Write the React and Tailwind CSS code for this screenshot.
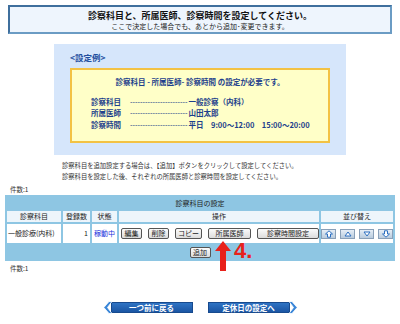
import React from "react";

const F = { fontFamily: '"Noto Sans CJK JP", "Noto Sans", sans-serif' };
const DASH = { fontFamily: '"Liberation Sans", Arial, sans-serif' };

function SortBtn({ kind }) {
  return (
    <div className="w-[16px] h-[10px] border border-[#8aa0b8] bg-gradient-to-b from-[#e6eef6] to-[#b9cbdd] flex items-center justify-center">
      <svg width="10" height="8" viewBox="0 0 10 8">
        {kind === "top" && (
          <g fill="#fff" stroke="#2c6fc0" strokeWidth="1">
            <path d="M5 0.8 L8.5 4 L6.5 4 L6.5 7.2 L3.5 7.2 L3.5 4 L1.5 4 Z" />
          </g>
        )}
        {kind === "up" && <path d="M5 2 L8 6 L2 6 Z" fill="#fff" stroke="#2c6fc0" strokeWidth="1" />}
        {kind === "down" && <path d="M2 2 L8 2 L5 6 Z" fill="#fff" stroke="#2c6fc0" strokeWidth="1" />}
        {kind === "bottom" && (
          <g fill="#fff" stroke="#2c6fc0" strokeWidth="1">
            <path d="M5 7.2 L8.5 4 L6.5 4 L6.5 0.8 L3.5 0.8 L3.5 4 L1.5 4 Z" />
          </g>
        )}
      </svg>
    </div>
  );
}

function Btn({ children, w }) {
  return (
    <div
      className={`${w} h-[11px] border border-[#555] rounded-[2px] bg-gradient-to-b from-[#fbfbfb] to-[#dcdcdc] flex items-center justify-center text-[7px] leading-none text-[#222]`}
    >
      {children}
    </div>
  );
}

function NavBtn({ children, dir }) {
  return (
    <div className="relative flex items-center">
      {dir === "left" && (
        <svg width="10" height="13" viewBox="0 0 10 13" className="relative z-10 -mr-[2px]">
          <path d="M9 0.5 L6 0.5 L0.8 6.5 L6 12.5 L9 12.5 L4.5 6.5 Z" fill="#3a86d8" stroke="#fff" strokeWidth="0.8" />
        </svg>
      )}
      <div className="w-[82px] h-[11px] bg-gradient-to-b from-[#2f74c4] to-[#1b55a3] border border-[#174a8e] flex items-center justify-center text-white text-[7.5px] font-bold leading-none">
        {children}
      </div>
      {dir === "right" && (
        <svg width="10" height="13" viewBox="0 0 10 13" className="relative z-10 -ml-[2px]">
          <path d="M1 0.5 L4 0.5 L9.2 6.5 L4 12.5 L1 12.5 L5.5 6.5 Z" fill="#3a86d8" stroke="#fff" strokeWidth="0.8" />
        </svg>
      )}
    </div>
  );
}

function Dashes() {
  return (
    <span className="whitespace-nowrap font-normal mr-[1px]" style={DASH}>
      -----------------------
    </span>
  );
}

export default function App() {
  return (
    <div className="relative w-[400px] h-[324px] bg-white overflow-hidden text-[#222]" style={F}>
      {/* Header */}
      <div className="mx-[8px] mt-[5px] h-[29px] border-2 border-t-[#3f6f9d] border-l-[#3f6f9d] border-r-[#6b9cc4] border-b-[#6b9cc4] bg-[#eef5fd] flex flex-col items-center pt-[2px]">
        <div className="text-[9px] font-bold leading-[13px] text-[#111]">診察科目と、所属医師、診察時間を設定してください。</div>
        <div className="text-[7px] leading-[9px] text-[#222]">ここで決定した場合でも、あとから追加･変更できます。</div>
      </div>

      {/* Example */}
      <div className="ml-[54px] mt-[10px] w-[292px] h-[111px] bg-[#d6e6fb] pt-[8px] px-[16px]">
        <div className="text-[8.5px] font-bold leading-[10px] text-[#1f4f9f]">&lt;設定例&gt;</div>
        <div className="mt-[6px] w-[260px] h-[75px] border-2 border-[#f3c244] bg-[#ffffc8] text-[#1e3f8c] font-bold text-[7.5px] leading-[11.5px]">
          <div className="text-center mt-[6px]">診察科目 - 所属医師- 診察時間 の設定が必要です。</div>
          <div className="mt-[8px] ml-[19px]">
            <div className="flex">
              <span className="w-[39px]">診察科目</span>
              <Dashes />
              <span>一般診察（内科）</span>
            </div>
            <div className="flex">
              <span className="w-[39px]">所属医師</span>
              <Dashes />
              <span>山田太郎</span>
            </div>
            <div className="flex">
              <span className="w-[39px]">診察時間</span>
              <Dashes />
              <span>平日　9:00～12:00　15:00～20:00</span>
            </div>
          </div>
        </div>
      </div>

      {/* Paragraph */}
      <div className="ml-[62px] mt-[5px] text-[6.3px] leading-[11px] text-[#333]">
        <div>診察科目を追加設定する場合は、【追加】ボタンをクリックして設定してください。</div>
        <div>診察科目を設定した後、それぞれの所属医師と診察時間を設定してください。</div>
      </div>

      <div className="ml-[10px] mt-[2px] text-[6.5px] leading-[10px] text-[#333]">件数:1</div>

      {/* Table */}
      <table className="ml-[5px] mt-[1px] w-[390px] table-fixed border-separate border-spacing-[2px] bg-[#8ec6e3] text-[7px] leading-none">
        <colgroup>
          <col className="w-[54px]" />
          <col className="w-[27px]" />
          <col className="w-[25px]" />
          <col className="w-[200px]" />
          <col />
        </colgroup>
        <tbody>
          <tr>
            <td colSpan={5} className="h-[12px] text-center text-[#222]">診察科目の設定</td>
          </tr>
          <tr className="text-center text-[#222]">
            <td className="h-[11px] bg-[#edf5fb]">診察科目</td>
            <td className="bg-[#edf5fb]">登録数</td>
            <td className="bg-[#edf5fb]">状態</td>
            <td className="bg-[#edf5fb]">操作</td>
            <td className="bg-[#edf5fb]">並び替え</td>
          </tr>
          <tr>
            <td className="h-[19px] bg-white pl-[1px] whitespace-nowrap">一般診療(内科)</td>
            <td className="bg-white text-right pr-[2px]">1</td>
            <td className="bg-white text-center text-[#2233dd]">稼動中</td>
            <td className="bg-white">
              <div className="flex items-center gap-[6px] pl-[2px]">
                <Btn w="w-[21px]">編集</Btn>
                <Btn w="w-[21px]">削除</Btn>
                <Btn w="w-[27px]">コピー</Btn>
                <Btn w="w-[43px]">所属医師</Btn>
                <Btn w="w-[62px]">診察時間設定</Btn>
              </div>
            </td>
            <td className="bg-white">
              <div className="flex items-center justify-center gap-[4px]">
                <SortBtn kind="top" />
                <SortBtn kind="up" />
                <SortBtn kind="down" />
                <SortBtn kind="bottom" />
              </div>
            </td>
          </tr>
          <tr>
            <td colSpan={5} className="h-[14px]">
              <div className="flex justify-center">
                <Btn w="w-[21px]">追加</Btn>
              </div>
            </td>
          </tr>
        </tbody>
      </table>

      <div className="ml-[10px] mt-[2px] text-[6.5px] leading-[10px] text-[#333]">件数:1</div>

      {/* Nav */}
      <div className="mt-[28px] flex justify-center gap-[15px]">
        <NavBtn dir="left">一つ前に戻る</NavBtn>
        <NavBtn dir="right">定休日の設定へ</NavBtn>
      </div>

      {/* Annotation overlay */}
      <svg className="absolute left-[214px] top-[241px]" width="18" height="30" viewBox="0 0 18 30">
        <path d="M9 0 L17 10 L12 10 L12 30 L6 30 L6 10 L1 10 Z" fill="#e8211b" />
      </svg>
      <div
        className="absolute left-[234px] top-[239px] text-[22px] leading-[24px] font-bold text-[#e8211b]"
        style={{ fontFamily: '"Liberation Sans", Arial, sans-serif' }}
      >
        4.
      </div>
    </div>
  );
}
